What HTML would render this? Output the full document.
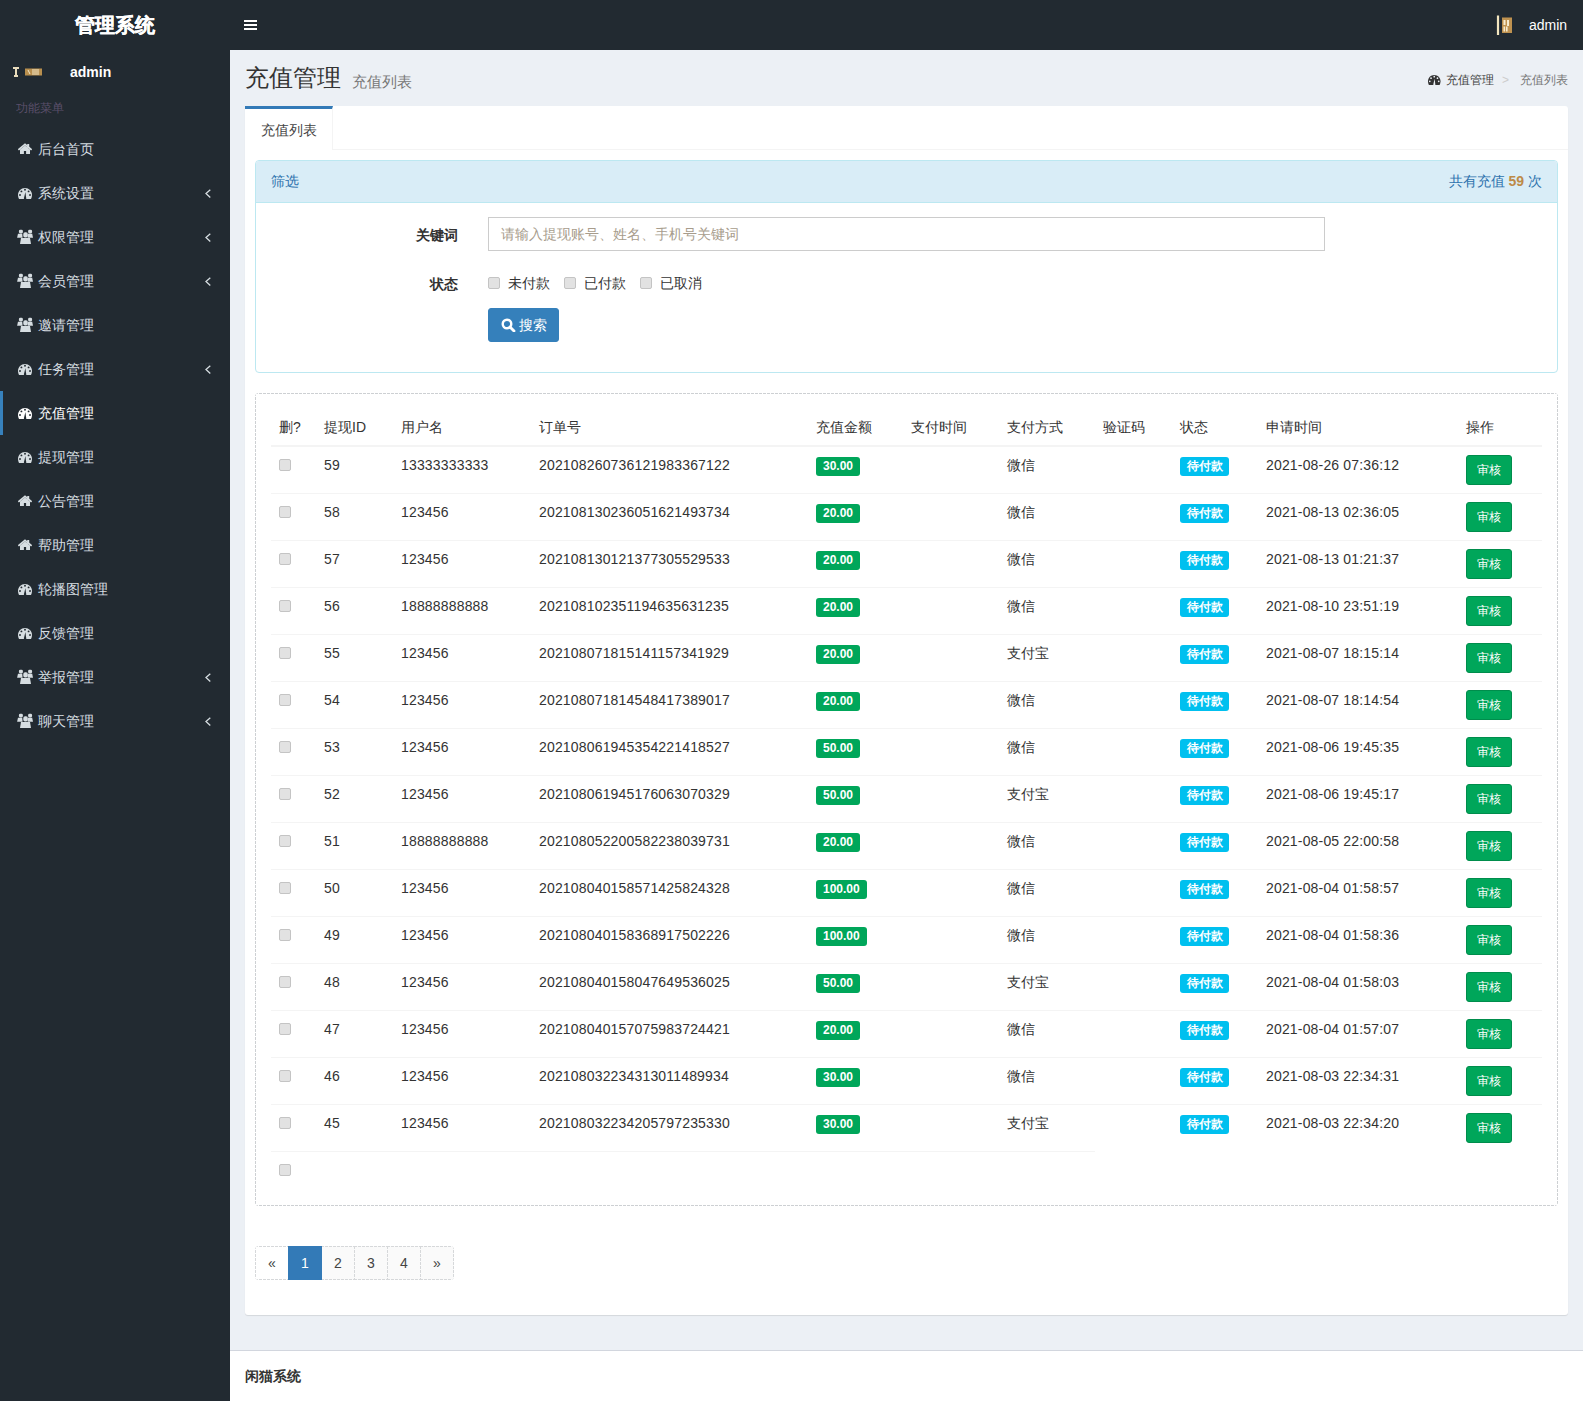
<!DOCTYPE html>
<html><head><meta charset="utf-8"><title>管理系统</title>
<style>
*{box-sizing:border-box}
html,body{margin:0;padding:0}
body{width:1583px;height:1401px;overflow:hidden;position:relative;background:#222a31;font-family:"Liberation Sans",sans-serif;font-size:14px;color:#333;line-height:20px}
.hdr{position:absolute;left:0;top:0;width:1583px;height:50px;background:#222a31}
.logo{position:absolute;left:0;top:0;width:230px;height:50px;line-height:50px;text-align:center;color:#fff;font-size:20px;font-weight:bold;-webkit-text-stroke:0.3px #fff}
.burger{position:absolute;left:244px;top:20px;width:13px}
.burger i{display:block;height:2px;background:#fff;margin-bottom:2px}
.uimg{position:absolute;left:1496px;top:15px;width:20px;height:21px}
.uname{position:absolute;left:1529px;top:15px;color:#fff;font-size:14px;line-height:20px}
.side{position:absolute;left:0;top:50px;width:230px;height:1351px;background:#222a31}
.upanel-img{position:absolute;left:12px;top:67px}
.upanel-name{position:absolute;left:70px;top:62px;color:#fff;font-weight:bold;font-size:14px;line-height:20px}
.mhdr{position:absolute;left:16px;top:100px;color:#5a4f6a;font-size:12px;line-height:17px}
.mi{position:absolute;left:0;width:230px;height:44px;color:#d6dde1;font-size:14px}
.mi.active{color:#fff;border-left:3px solid #3781bc}
.mi .icw{position:absolute}
.mi .ic-home{left:18px;top:16px}
.mi .ic-dash{left:18px;top:17px}
.mi .ic-users{left:17px;top:14px}
.mi.active .ic-dash{left:15px}
.mi .mt{position:absolute;left:38px;top:12px;line-height:20px}
.mi.active .mt{left:35px}
.mi .arr{position:absolute;left:204.5px;top:17.5px}
.ic{display:block}
.wrap{position:absolute;left:230px;top:50px;width:1353px;height:1300px;background:#ecf0f5}
.h1{position:absolute;left:245px;top:65px;font-size:24px;line-height:26px;color:#333}
.h1 small{font-size:15px;color:#777;margin-left:11px;position:relative;top:1px}
.bc{position:absolute;right:15px;top:70px;font-size:12px;line-height:20px;color:#444}
.bc .sep{color:#ccc;padding:0 11px 0 8px}
.bc .act{color:#777}
.box{position:absolute;left:245px;top:106px;width:1323px;height:1209px;background:#fff;border-radius:3px;box-shadow:0 1px 1px rgba(0,0,0,.1)}
.tabbar{position:absolute;left:0;top:0;width:1323px;height:44px;border-bottom:1px solid #f4f4f4}
.tab{position:absolute;left:0;top:0;width:88px;height:44px;border-top:3px solid #337ab7;border-right:1px solid #f4f4f4;background:#fff;color:#444;padding-left:16px;line-height:42px;font-size:14px}
.panel{position:absolute;left:10px;top:54px;width:1303px;height:213px;border:1px solid #bce8f1;border-radius:4px;background:#fff}
.ph{height:42px;background:#d9edf7;border-bottom:1px solid #bce8f1;border-radius:3px 3px 0 0;color:#2d72ad;padding:10px 15px;line-height:20px;position:relative}
.ph .cnt{position:absolute;right:15px;top:10px;color:#2d72ad}
.ph .cnt b{color:#bd8a48}
.flabel{position:absolute;font-weight:bold;text-align:right;width:200px;line-height:20px}
.finput{position:absolute;left:232px;top:56px;width:837px;height:34px;border:1px solid #ccc;color:#a79c8c;padding:6px 12px;line-height:20px}
.chk{position:absolute;top:106px;line-height:20px}
.cb{display:inline-block;width:12px;height:12px;border:1px solid #c4c4c4;border-radius:2px;background:#e2e2e2;vertical-align:middle}
.sbtn{position:absolute;left:232px;top:147px;width:71px;height:34px;background:#3580bb;border:1px solid #3580bb;border-radius:3px;color:#fff;line-height:32px;padding-left:12px}
.tbox{position:absolute;left:10px;top:287px;width:1303px;height:813px;border-radius:4px;background:linear-gradient(90deg,#cdd0d3 3px,transparent 3px) 0 0/4px 1px repeat-x,linear-gradient(90deg,#cdd0d3 3px,transparent 3px) 0 100%/4px 1px repeat-x,linear-gradient(180deg,#cdd0d3 3px,transparent 3px) 0 0/1px 4px repeat-y,linear-gradient(180deg,#cdd0d3 3px,transparent 3px) 100% 0/1px 4px repeat-y}
table{position:absolute;left:16px;top:16px;border-collapse:collapse;table-layout:fixed;width:1271px}
th{text-align:left;font-weight:normal;padding:8px;line-height:20px;border-bottom:2px solid #f4f4f4;color:#333}
td{letter-spacing:0.17px}
td .lbl,td .btn{letter-spacing:0}
td{padding:8px;line-height:20px;border-top:1px solid #f4f4f4;vertical-align:top;color:#333;height:47px}
tr:first-child td{border-top:0}
td .cb{margin-top:4px;vertical-align:top}
.lbl{display:inline-block;font-size:12px;font-weight:bold;color:#fff;line-height:14px;padding:2px 7px 3px;border-radius:3px;vertical-align:top;margin-top:2px}
.ls{background:#00a65a}
.li{background:#00c0ef;padding-right:6px}
.btn{display:inline-block;background:#00a65a;border:1px solid #008d4c;border-radius:3px;color:#fff;font-size:12px;line-height:18px;padding:5px 10px;width:46px;text-align:center}
.pg{position:absolute;left:10px;top:1140px;height:34px;display:flex}
.pg span{display:block;height:34px;width:34px;margin-left:-1px;text-align:center;line-height:34px;color:#444;background:linear-gradient(90deg,#d6d8da 3px,transparent 3px) 0 0/4px 1px repeat-x,linear-gradient(90deg,#d6d8da 3px,transparent 3px) 0 100%/4px 1px repeat-x,linear-gradient(180deg,#d6d8da 3px,transparent 3px) 0 0/1px 4px repeat-y,linear-gradient(180deg,#d6d8da 3px,transparent 3px) 100% 0/1px 4px repeat-y,#fafafa}
.pg span:first-child{margin-left:0;border-radius:4px 0 0 4px;background-color:#fff}
.pg span:last-child{border-radius:0 4px 4px 0}
.pg span.on{background:#337ab7;color:#fff;position:relative;z-index:1}
.foot{position:absolute;left:230px;top:1350px;width:1353px;height:51px;background:#fff;border-top:1px solid #d2d6de;padding:15px;font-weight:bold;color:#333}
</style></head><body>
<div class="hdr">
 <div class="logo">管理系统</div>
 <div class="burger"><i></i><i></i><i></i></div>
 <svg class="uimg" width="20" height="21" viewBox="0 0 20 21"><path d="M2 0.5 V20" stroke="#f3e6bf" stroke-width="2.2"/><rect x="6" y="2.5" width="10" height="15.5" fill="#bf9250"/><rect x="7.5" y="5" width="2" height="5" fill="#f7ecd0"/><rect x="11" y="5" width="2" height="6" fill="#f7ecd0"/><rect x="7.5" y="11.5" width="1.6" height="5" fill="#f7ecd0"/><rect x="10" y="11.5" width="1.6" height="5" fill="#f7ecd0"/></svg>
 <div class="uname">admin</div>
</div>
<div class="side">
</div>
<svg class="upanel-img" width="36" height="10" viewBox="0 0 36 10"><path d="M1 1 H7 M4 1 V9 M2 9 H6" stroke="#e9dcbc" stroke-width="2" fill="none"/><rect x="13" y="1.5" width="17" height="7" fill="#b98f4e"/><path d="M16 3 L18 7 M20 3 H27 M20 5 H27 M20 7 H27" stroke="#f2e6c8" stroke-width="1"/></svg>
<div class="upanel-name">admin</div>
<div class="mhdr">功能菜单</div>
<div class="mi" style="top:127px"><span class="icw ic-home"><svg class="ic" width="14" height="12" viewBox="0 0 14 12"><path d="M0.4 6.9 L7 1.3 L13.6 6.9" stroke="currentColor" stroke-width="1.7" fill="none"/><path d="M2 6.6 L7 2.6 L12 6.6 V11 H8.1 V8 H5.9 V11 H2 Z" fill="currentColor"/><rect x="9.2" y="1" width="2" height="4" fill="currentColor"/></svg></span><span class="mt">后台首页</span></div>
<div class="mi" style="top:171px"><span class="icw ic-dash"><svg class="ic" width="14" height="11" viewBox="0 0 14 11"><path d="M7 0 C3.1 0 0 3.1 0 7 C0 8.5 0.4 9.8 1 11 H13 C13.6 9.8 14 8.5 14 7 C14 3.1 10.9 0 7 0 Z" fill="currentColor"/><circle cx="7" cy="1.8" r="0.95" fill="#222a31"/><circle cx="3.4" cy="3.4" r="0.95" fill="#222a31"/><circle cx="10.6" cy="3.4" r="0.95" fill="#222a31"/><circle cx="2" cy="7" r="0.95" fill="#222a31"/><circle cx="12" cy="7" r="0.95" fill="#222a31"/><path d="M7.4 4 L8.1 9.6 A1.2 1.2 0 1 1 6.1 9.6 Z" fill="#222a31"/></svg></span><span class="mt">系统设置</span><svg class="arr" width="6" height="10" viewBox="0 0 6 10"><path d="M5.3 0.7 L1 4.6 L5.3 8.5" stroke="#d6dde1" stroke-width="1.3" fill="none"/></svg></div>
<div class="mi" style="top:215px"><span class="icw ic-users"><svg class="ic" width="16" height="15" viewBox="0 0 16 15"><rect x="1.9" y="0.8" width="4" height="3.6" rx="1.4" fill="currentColor"/><rect x="11.1" y="0.8" width="4" height="3.6" rx="1.4" fill="currentColor"/><rect x="6.3" y="3.3" width="4.5" height="5.3" rx="1.8" fill="currentColor"/><path d="M1 4.8 H5.2 L5.6 8.8 H0.1 Z" fill="currentColor"/><path d="M11 4.8 H15.2 L16 8.8 H10.6 Z" fill="currentColor"/><path d="M4 9.1 H13 L14 14.9 H3 Z" fill="currentColor"/></svg></span><span class="mt">权限管理</span><svg class="arr" width="6" height="10" viewBox="0 0 6 10"><path d="M5.3 0.7 L1 4.6 L5.3 8.5" stroke="#d6dde1" stroke-width="1.3" fill="none"/></svg></div>
<div class="mi" style="top:259px"><span class="icw ic-users"><svg class="ic" width="16" height="15" viewBox="0 0 16 15"><rect x="1.9" y="0.8" width="4" height="3.6" rx="1.4" fill="currentColor"/><rect x="11.1" y="0.8" width="4" height="3.6" rx="1.4" fill="currentColor"/><rect x="6.3" y="3.3" width="4.5" height="5.3" rx="1.8" fill="currentColor"/><path d="M1 4.8 H5.2 L5.6 8.8 H0.1 Z" fill="currentColor"/><path d="M11 4.8 H15.2 L16 8.8 H10.6 Z" fill="currentColor"/><path d="M4 9.1 H13 L14 14.9 H3 Z" fill="currentColor"/></svg></span><span class="mt">会员管理</span><svg class="arr" width="6" height="10" viewBox="0 0 6 10"><path d="M5.3 0.7 L1 4.6 L5.3 8.5" stroke="#d6dde1" stroke-width="1.3" fill="none"/></svg></div>
<div class="mi" style="top:303px"><span class="icw ic-users"><svg class="ic" width="16" height="15" viewBox="0 0 16 15"><rect x="1.9" y="0.8" width="4" height="3.6" rx="1.4" fill="currentColor"/><rect x="11.1" y="0.8" width="4" height="3.6" rx="1.4" fill="currentColor"/><rect x="6.3" y="3.3" width="4.5" height="5.3" rx="1.8" fill="currentColor"/><path d="M1 4.8 H5.2 L5.6 8.8 H0.1 Z" fill="currentColor"/><path d="M11 4.8 H15.2 L16 8.8 H10.6 Z" fill="currentColor"/><path d="M4 9.1 H13 L14 14.9 H3 Z" fill="currentColor"/></svg></span><span class="mt">邀请管理</span></div>
<div class="mi" style="top:347px"><span class="icw ic-dash"><svg class="ic" width="14" height="11" viewBox="0 0 14 11"><path d="M7 0 C3.1 0 0 3.1 0 7 C0 8.5 0.4 9.8 1 11 H13 C13.6 9.8 14 8.5 14 7 C14 3.1 10.9 0 7 0 Z" fill="currentColor"/><circle cx="7" cy="1.8" r="0.95" fill="#222a31"/><circle cx="3.4" cy="3.4" r="0.95" fill="#222a31"/><circle cx="10.6" cy="3.4" r="0.95" fill="#222a31"/><circle cx="2" cy="7" r="0.95" fill="#222a31"/><circle cx="12" cy="7" r="0.95" fill="#222a31"/><path d="M7.4 4 L8.1 9.6 A1.2 1.2 0 1 1 6.1 9.6 Z" fill="#222a31"/></svg></span><span class="mt">任务管理</span><svg class="arr" width="6" height="10" viewBox="0 0 6 10"><path d="M5.3 0.7 L1 4.6 L5.3 8.5" stroke="#d6dde1" stroke-width="1.3" fill="none"/></svg></div>
<div class="mi active" style="top:391px"><span class="icw ic-dash"><svg class="ic" width="14" height="11" viewBox="0 0 14 11"><path d="M7 0 C3.1 0 0 3.1 0 7 C0 8.5 0.4 9.8 1 11 H13 C13.6 9.8 14 8.5 14 7 C14 3.1 10.9 0 7 0 Z" fill="currentColor"/><circle cx="7" cy="1.8" r="0.95" fill="#222a31"/><circle cx="3.4" cy="3.4" r="0.95" fill="#222a31"/><circle cx="10.6" cy="3.4" r="0.95" fill="#222a31"/><circle cx="2" cy="7" r="0.95" fill="#222a31"/><circle cx="12" cy="7" r="0.95" fill="#222a31"/><path d="M7.4 4 L8.1 9.6 A1.2 1.2 0 1 1 6.1 9.6 Z" fill="#222a31"/></svg></span><span class="mt">充值管理</span></div>
<div class="mi" style="top:435px"><span class="icw ic-dash"><svg class="ic" width="14" height="11" viewBox="0 0 14 11"><path d="M7 0 C3.1 0 0 3.1 0 7 C0 8.5 0.4 9.8 1 11 H13 C13.6 9.8 14 8.5 14 7 C14 3.1 10.9 0 7 0 Z" fill="currentColor"/><circle cx="7" cy="1.8" r="0.95" fill="#222a31"/><circle cx="3.4" cy="3.4" r="0.95" fill="#222a31"/><circle cx="10.6" cy="3.4" r="0.95" fill="#222a31"/><circle cx="2" cy="7" r="0.95" fill="#222a31"/><circle cx="12" cy="7" r="0.95" fill="#222a31"/><path d="M7.4 4 L8.1 9.6 A1.2 1.2 0 1 1 6.1 9.6 Z" fill="#222a31"/></svg></span><span class="mt">提现管理</span></div>
<div class="mi" style="top:479px"><span class="icw ic-home"><svg class="ic" width="14" height="12" viewBox="0 0 14 12"><path d="M0.4 6.9 L7 1.3 L13.6 6.9" stroke="currentColor" stroke-width="1.7" fill="none"/><path d="M2 6.6 L7 2.6 L12 6.6 V11 H8.1 V8 H5.9 V11 H2 Z" fill="currentColor"/><rect x="9.2" y="1" width="2" height="4" fill="currentColor"/></svg></span><span class="mt">公告管理</span></div>
<div class="mi" style="top:523px"><span class="icw ic-home"><svg class="ic" width="14" height="12" viewBox="0 0 14 12"><path d="M0.4 6.9 L7 1.3 L13.6 6.9" stroke="currentColor" stroke-width="1.7" fill="none"/><path d="M2 6.6 L7 2.6 L12 6.6 V11 H8.1 V8 H5.9 V11 H2 Z" fill="currentColor"/><rect x="9.2" y="1" width="2" height="4" fill="currentColor"/></svg></span><span class="mt">帮助管理</span></div>
<div class="mi" style="top:567px"><span class="icw ic-dash"><svg class="ic" width="14" height="11" viewBox="0 0 14 11"><path d="M7 0 C3.1 0 0 3.1 0 7 C0 8.5 0.4 9.8 1 11 H13 C13.6 9.8 14 8.5 14 7 C14 3.1 10.9 0 7 0 Z" fill="currentColor"/><circle cx="7" cy="1.8" r="0.95" fill="#222a31"/><circle cx="3.4" cy="3.4" r="0.95" fill="#222a31"/><circle cx="10.6" cy="3.4" r="0.95" fill="#222a31"/><circle cx="2" cy="7" r="0.95" fill="#222a31"/><circle cx="12" cy="7" r="0.95" fill="#222a31"/><path d="M7.4 4 L8.1 9.6 A1.2 1.2 0 1 1 6.1 9.6 Z" fill="#222a31"/></svg></span><span class="mt">轮播图管理</span></div>
<div class="mi" style="top:611px"><span class="icw ic-dash"><svg class="ic" width="14" height="11" viewBox="0 0 14 11"><path d="M7 0 C3.1 0 0 3.1 0 7 C0 8.5 0.4 9.8 1 11 H13 C13.6 9.8 14 8.5 14 7 C14 3.1 10.9 0 7 0 Z" fill="currentColor"/><circle cx="7" cy="1.8" r="0.95" fill="#222a31"/><circle cx="3.4" cy="3.4" r="0.95" fill="#222a31"/><circle cx="10.6" cy="3.4" r="0.95" fill="#222a31"/><circle cx="2" cy="7" r="0.95" fill="#222a31"/><circle cx="12" cy="7" r="0.95" fill="#222a31"/><path d="M7.4 4 L8.1 9.6 A1.2 1.2 0 1 1 6.1 9.6 Z" fill="#222a31"/></svg></span><span class="mt">反馈管理</span></div>
<div class="mi" style="top:655px"><span class="icw ic-users"><svg class="ic" width="16" height="15" viewBox="0 0 16 15"><rect x="1.9" y="0.8" width="4" height="3.6" rx="1.4" fill="currentColor"/><rect x="11.1" y="0.8" width="4" height="3.6" rx="1.4" fill="currentColor"/><rect x="6.3" y="3.3" width="4.5" height="5.3" rx="1.8" fill="currentColor"/><path d="M1 4.8 H5.2 L5.6 8.8 H0.1 Z" fill="currentColor"/><path d="M11 4.8 H15.2 L16 8.8 H10.6 Z" fill="currentColor"/><path d="M4 9.1 H13 L14 14.9 H3 Z" fill="currentColor"/></svg></span><span class="mt">举报管理</span><svg class="arr" width="6" height="10" viewBox="0 0 6 10"><path d="M5.3 0.7 L1 4.6 L5.3 8.5" stroke="#d6dde1" stroke-width="1.3" fill="none"/></svg></div>
<div class="mi" style="top:699px"><span class="icw ic-users"><svg class="ic" width="16" height="15" viewBox="0 0 16 15"><rect x="1.9" y="0.8" width="4" height="3.6" rx="1.4" fill="currentColor"/><rect x="11.1" y="0.8" width="4" height="3.6" rx="1.4" fill="currentColor"/><rect x="6.3" y="3.3" width="4.5" height="5.3" rx="1.8" fill="currentColor"/><path d="M1 4.8 H5.2 L5.6 8.8 H0.1 Z" fill="currentColor"/><path d="M11 4.8 H15.2 L16 8.8 H10.6 Z" fill="currentColor"/><path d="M4 9.1 H13 L14 14.9 H3 Z" fill="currentColor"/></svg></span><span class="mt">聊天管理</span><svg class="arr" width="6" height="10" viewBox="0 0 6 10"><path d="M5.3 0.7 L1 4.6 L5.3 8.5" stroke="#d6dde1" stroke-width="1.3" fill="none"/></svg></div>

<div class="wrap"></div>
<div class="h1">充值管理<small>充值列表</small></div>
<div class="bc"><svg class="ic" width="12.5" height="10" style="display:inline-block;vertical-align:-1px;margin-right:5px;color:#333" viewBox="0 0 14 11"><path d="M7 0 C3.1 0 0 3.1 0 7 C0 8.5 0.4 9.8 1 11 H13 C13.6 9.8 14 8.5 14 7 C14 3.1 10.9 0 7 0 Z" fill="currentColor"/><circle cx="7" cy="1.8" r="0.95" fill="#ecf0f5"/><circle cx="3.4" cy="3.4" r="0.95" fill="#ecf0f5"/><circle cx="10.6" cy="3.4" r="0.95" fill="#ecf0f5"/><circle cx="2" cy="7" r="0.95" fill="#ecf0f5"/><circle cx="12" cy="7" r="0.95" fill="#ecf0f5"/><path d="M7.4 4 L8.1 9.6 A1.2 1.2 0 1 1 6.1 9.6 Z" fill="#ecf0f5"/></svg>充值管理<span class="sep">&gt;</span><span class="act">充值列表</span></div>
<div class="box">
 <div class="tabbar"></div>
 <div class="tab">充值列表</div>
 <div class="panel">
  <div class="ph">筛选<span class="cnt">共有充值 <b>59</b> 次</span></div>
  <div class="flabel" style="left:2px;top:64px">关键词</div>
  <div class="finput">请输入提现账号、姓名、手机号关键词</div>
  <div class="flabel" style="left:2px;top:113px">状态</div>
  <div class="chk" style="left:232px;top:112px"><span class="cb" style="vertical-align:-1px"></span><span style="margin-left:8px">未付款</span></div>
  <div class="chk" style="left:308px;top:112px"><span class="cb" style="vertical-align:-1px"></span><span style="margin-left:8px">已付款</span></div>
  <div class="chk" style="left:384px;top:112px"><span class="cb" style="vertical-align:-1px"></span><span style="margin-left:8px">已取消</span></div>
  <div class="sbtn"><svg width="15" height="14" viewBox="0 0 15 14" style="vertical-align:-2px;margin-right:3px"><circle cx="6" cy="6" r="4.3" stroke="#fff" stroke-width="2.4" fill="none"/><path d="M9 9 L13 13" stroke="#fff" stroke-width="2.8" stroke-linecap="round"/></svg>搜索</div>
 </div>
 <div class="tbox">
  <table>
   <colgroup><col style="width:45px"><col style="width:77px"><col style="width:138px"><col style="width:277px"><col style="width:95px"><col style="width:96px"><col style="width:96px"><col style="width:77px"><col style="width:86px"><col style="width:200px"><col style="width:84px"></colgroup>
   <thead><tr><th>删?</th><th>提现ID</th><th>用户名</th><th>订单号</th><th>充值金额</th><th>支付时间</th><th>支付方式</th><th>验证码</th><th>状态</th><th>申请时间</th><th>操作</th></tr></thead>
   <tbody>
<tr><td><span class="cb"></span></td><td>59</td><td>13333333333</td><td class="num">202108260736121983367122</td><td><span class="lbl ls">30.00</span></td><td></td><td>微信</td><td></td><td><span class="lbl li">待付款</span></td><td>2021-08-26 07:36:12</td><td><span class="btn">审核</span></td></tr>
<tr><td><span class="cb"></span></td><td>58</td><td>123456</td><td class="num">202108130236051621493734</td><td><span class="lbl ls">20.00</span></td><td></td><td>微信</td><td></td><td><span class="lbl li">待付款</span></td><td>2021-08-13 02:36:05</td><td><span class="btn">审核</span></td></tr>
<tr><td><span class="cb"></span></td><td>57</td><td>123456</td><td class="num">202108130121377305529533</td><td><span class="lbl ls">20.00</span></td><td></td><td>微信</td><td></td><td><span class="lbl li">待付款</span></td><td>2021-08-13 01:21:37</td><td><span class="btn">审核</span></td></tr>
<tr><td><span class="cb"></span></td><td>56</td><td>18888888888</td><td class="num">202108102351194635631235</td><td><span class="lbl ls">20.00</span></td><td></td><td>微信</td><td></td><td><span class="lbl li">待付款</span></td><td>2021-08-10 23:51:19</td><td><span class="btn">审核</span></td></tr>
<tr><td><span class="cb"></span></td><td>55</td><td>123456</td><td class="num">202108071815141157341929</td><td><span class="lbl ls">20.00</span></td><td></td><td>支付宝</td><td></td><td><span class="lbl li">待付款</span></td><td>2021-08-07 18:15:14</td><td><span class="btn">审核</span></td></tr>
<tr><td><span class="cb"></span></td><td>54</td><td>123456</td><td class="num">202108071814548417389017</td><td><span class="lbl ls">20.00</span></td><td></td><td>微信</td><td></td><td><span class="lbl li">待付款</span></td><td>2021-08-07 18:14:54</td><td><span class="btn">审核</span></td></tr>
<tr><td><span class="cb"></span></td><td>53</td><td>123456</td><td class="num">202108061945354221418527</td><td><span class="lbl ls">50.00</span></td><td></td><td>微信</td><td></td><td><span class="lbl li">待付款</span></td><td>2021-08-06 19:45:35</td><td><span class="btn">审核</span></td></tr>
<tr><td><span class="cb"></span></td><td>52</td><td>123456</td><td class="num">202108061945176063070329</td><td><span class="lbl ls">50.00</span></td><td></td><td>支付宝</td><td></td><td><span class="lbl li">待付款</span></td><td>2021-08-06 19:45:17</td><td><span class="btn">审核</span></td></tr>
<tr><td><span class="cb"></span></td><td>51</td><td>18888888888</td><td class="num">202108052200582238039731</td><td><span class="lbl ls">20.00</span></td><td></td><td>微信</td><td></td><td><span class="lbl li">待付款</span></td><td>2021-08-05 22:00:58</td><td><span class="btn">审核</span></td></tr>
<tr><td><span class="cb"></span></td><td>50</td><td>123456</td><td class="num">202108040158571425824328</td><td><span class="lbl ls">100.00</span></td><td></td><td>微信</td><td></td><td><span class="lbl li">待付款</span></td><td>2021-08-04 01:58:57</td><td><span class="btn">审核</span></td></tr>
<tr><td><span class="cb"></span></td><td>49</td><td>123456</td><td class="num">202108040158368917502226</td><td><span class="lbl ls">100.00</span></td><td></td><td>微信</td><td></td><td><span class="lbl li">待付款</span></td><td>2021-08-04 01:58:36</td><td><span class="btn">审核</span></td></tr>
<tr><td><span class="cb"></span></td><td>48</td><td>123456</td><td class="num">202108040158047649536025</td><td><span class="lbl ls">50.00</span></td><td></td><td>支付宝</td><td></td><td><span class="lbl li">待付款</span></td><td>2021-08-04 01:58:03</td><td><span class="btn">审核</span></td></tr>
<tr><td><span class="cb"></span></td><td>47</td><td>123456</td><td class="num">202108040157075983724421</td><td><span class="lbl ls">20.00</span></td><td></td><td>微信</td><td></td><td><span class="lbl li">待付款</span></td><td>2021-08-04 01:57:07</td><td><span class="btn">审核</span></td></tr>
<tr><td><span class="cb"></span></td><td>46</td><td>123456</td><td class="num">202108032234313011489934</td><td><span class="lbl ls">30.00</span></td><td></td><td>微信</td><td></td><td><span class="lbl li">待付款</span></td><td>2021-08-03 22:34:31</td><td><span class="btn">审核</span></td></tr>
<tr><td><span class="cb"></span></td><td>45</td><td>123456</td><td class="num">202108032234205797235330</td><td><span class="lbl ls">30.00</span></td><td></td><td>支付宝</td><td></td><td><span class="lbl li">待付款</span></td><td>2021-08-03 22:34:20</td><td><span class="btn">审核</span></td></tr>
<tr class="last"><td colspan="7"><span class="cb"></span></td></tr>

   </tbody>
  </table>
 </div>
 <div class="pg"><span>&laquo;</span><span class="on">1</span><span>2</span><span>3</span><span>4</span><span>&raquo;</span></div>
</div>
<div class="foot">闲猫系统</div>
</body></html>
